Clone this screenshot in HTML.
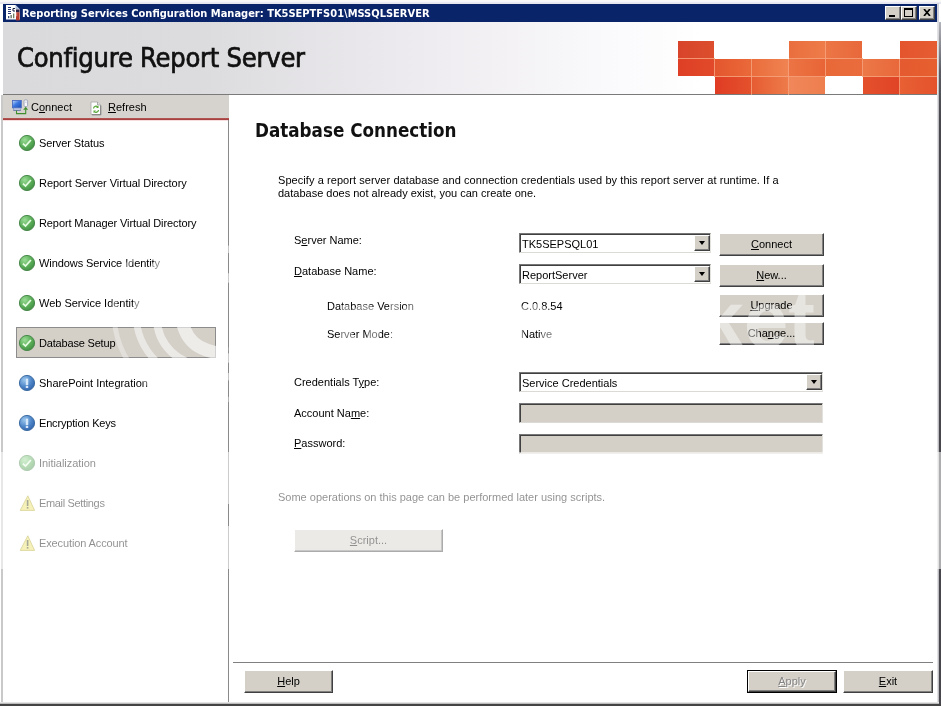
<!DOCTYPE html>
<html><head><meta charset="utf-8"><title>Reporting Services Configuration Manager</title>
<style>
html,body{margin:0;padding:0;}
body{width:941px;height:706px;overflow:hidden;background:#fff;position:relative;font-family:"Liberation Sans",sans-serif;font-size:11px;color:#000;}
.abs{position:absolute;}
.t{position:absolute;white-space:nowrap;line-height:13px;font-size:11px;will-change:transform;}
u{text-decoration:underline;text-underline-offset:1px;}
.btn{position:absolute;box-sizing:border-box;background:#d4d0c8;border:1px solid;border-color:#fff #404040 #404040 #fff;box-shadow:inset -1px -1px 0 #808080;text-align:center;font-size:11px;line-height:13px;}
.btn span{position:absolute;left:0;right:0;white-space:nowrap;will-change:transform;}
.sunk{position:absolute;box-sizing:border-box;border:1px solid;border-color:#777 #e4e2dc #dcdad4 #777;box-shadow:inset 1px 1px 0 #404040;}
.dd{position:absolute;box-sizing:border-box;width:16px;background:#d4d0c8;border:1px solid;border-color:#fff #404040 #404040 #fff;box-shadow:inset -1px -1px 0 #808080;}
.dd:after{content:"";position:absolute;left:3.5px;top:5px;border:3.5px solid transparent;border-top:4px solid #000;border-bottom:none;}
.nav{position:absolute;left:39px;white-space:nowrap;line-height:13px;font-size:11px;will-change:transform;}
.ic{position:absolute;left:18px;width:18px;height:18px;}
</style></head><body>

<!-- window frame -->
<div class="abs" style="left:0;top:0;width:941px;height:706px;background:#fff;"></div>
<div class="abs" style="left:0;top:0;width:941px;height:4px;background:linear-gradient(#f6f2ec 0,#fff 1px,#ecebf3 2px,#e4e4ee 4px);"></div>

<!-- title bar -->
<div class="abs" style="left:3px;top:4px;width:934px;height:18px;background:#0a246a;"></div>
<svg class="abs" style="left:5px;top:4px" width="17" height="18" viewBox="0 0 17 18">
  <path d="M1 1H10.500L15 5.500V15.500H1z" fill="#fff"/>
  <path d="M10.500 1L15 5.500H10.500z" fill="#aebbd6"/>
  <path d="M3 3.500h3M3 5.500h3M3 7.500h3M3 9.500h3" stroke="#2a3a78" stroke-width="1"/>
  <path d="M10 4.500H8V7h2" stroke="#10183c" stroke-width="1" fill="none"/>
  <rect x="3" y="12" width="1.300" height="2.200" fill="#3c4c74"/><rect x="5.500" y="11" width="1.300" height="3.200" fill="#5c6c58"/><rect x="8" y="9.500" width="1.300" height="4.700" fill="#6c7c5c"/>
  <rect x="11" y="5.500" width="3.600" height="3" fill="#2c2448"/>
  <rect x="11" y="8.300" width="3.600" height="8.100" fill="#b63c30"/>
  <rect x="11" y="8.300" width="1.200" height="4" fill="#d88078"/>
</svg>
<div class="t" id="title" style="left:21.5px;top:7px;color:#fff;font-weight:bold;font-family:'DejaVu Sans Condensed','Liberation Sans',sans-serif;">Reporting Services Configuration Manager: TK5SEPTFS01\MSSQLSERVER</div>

<div class="abs" style="left:937px;top:3px;width:2px;height:19px;background:#d2d2da;"></div>
<!-- caption buttons -->
<div class="btn" style="left:885px;top:6px;width:16px;height:14px;"><i class="abs" style="left:3px;top:8px;width:6px;height:2px;background:#000"></i></div>
<div class="btn" style="left:901px;top:6px;width:16px;height:14px;"><i class="abs" style="left:2px;top:1px;width:9px;height:9px;box-sizing:border-box;border:1px solid #000;border-top-width:2px"></i></div>
<div class="btn" style="left:919px;top:6px;width:16px;height:14px;">
 <svg class="abs" style="left:3px;top:2px" width="8" height="7" viewBox="0 0 8 7"><path d="M1 0L7 7M7 0L1 7" stroke="#000" stroke-width="1.700" fill="none"/></svg></div>

<!-- header band -->
<div class="abs" id="hdr" style="left:3px;top:22px;width:934px;height:72px;background:linear-gradient(90deg,#dad9dc 0,#dcdbde 200px,#eceaee 400px,#fbfafc 620px,#fff 700px);"></div>
<div class="abs" style="left:3px;top:94px;width:934px;height:1px;background:#7a7a7a;"></div>
<div class="t" id="hdrtxt" style="left:17.300px;top:42px;-webkit-text-stroke:.7px #111;font-size:27px;line-height:32px;color:#111;font-family:'DejaVu Sans Condensed','Liberation Sans',sans-serif;letter-spacing:-.23px;">Configure Report Server</div>

<!-- orange tiles -->
<svg class="abs" style="left:677px;top:40px" width="260" height="55" viewBox="677 40 260 55"><defs><linearGradient id="t00" x1="0" x2="1"><stop offset="0" stop-color="#d8442a"/><stop offset="1" stop-color="#dc4e2e"/></linearGradient><linearGradient id="t03" x1="0" x2="1"><stop offset="0" stop-color="#ea6e3e"/><stop offset="1" stop-color="#ee7c4a"/></linearGradient><linearGradient id="t04" x1="0" x2="1"><stop offset="0" stop-color="#ec7646"/><stop offset="1" stop-color="#e8683a"/></linearGradient><linearGradient id="t06" x1="0" x2="1"><stop offset="0" stop-color="#e4552e"/><stop offset="1" stop-color="#e65c32"/></linearGradient><linearGradient id="t10" x1="0" x2="1"><stop offset="0" stop-color="#de3f26"/><stop offset="1" stop-color="#e24a2a"/></linearGradient><linearGradient id="t11" x1="0" x2="1"><stop offset="0" stop-color="#e4562e"/><stop offset="1" stop-color="#ea6a3a"/></linearGradient><linearGradient id="t12" x1="0" x2="1"><stop offset="0" stop-color="#ea6c3c"/><stop offset="1" stop-color="#f08452"/></linearGradient><linearGradient id="t13" x1="0" x2="1"><stop offset="0" stop-color="#ec7444"/><stop offset="1" stop-color="#e86436"/></linearGradient><linearGradient id="t14" x1="0" x2="1"><stop offset="0" stop-color="#e86838"/><stop offset="1" stop-color="#ea6c3c"/></linearGradient><linearGradient id="t15" x1="0" x2="1"><stop offset="0" stop-color="#ec7848"/><stop offset="1" stop-color="#e8683a"/></linearGradient><linearGradient id="t16" x1="0" x2="1"><stop offset="0" stop-color="#e55a30"/><stop offset="1" stop-color="#e6602f"/></linearGradient><linearGradient id="t21" x1="0" x2="1"><stop offset="0" stop-color="#e03c24"/><stop offset="1" stop-color="#e4522c"/></linearGradient><linearGradient id="t22" x1="0" x2="1"><stop offset="0" stop-color="#e65c32"/><stop offset="1" stop-color="#ee7c4a"/></linearGradient><linearGradient id="t23" x1="0" x2="1"><stop offset="0" stop-color="#f0875a"/><stop offset="1" stop-color="#ee7e4e"/></linearGradient><linearGradient id="t25" x1="0" x2="1"><stop offset="0" stop-color="#e4502c"/><stop offset="1" stop-color="#e04426"/></linearGradient><linearGradient id="t26" x1="0" x2="1"><stop offset="0" stop-color="#e86034"/><stop offset="1" stop-color="#e4522c"/></linearGradient></defs><rect x="678" y="41" width="36" height="18" fill="url(#t00)"/><rect x="789" y="41" width="37" height="18" fill="url(#t03)"/><rect x="826" y="41" width="36" height="18" fill="url(#t04)"/><rect x="900" y="41" width="37" height="18" fill="url(#t06)"/><rect x="678" y="59" width="37" height="17" fill="url(#t10)"/><rect x="715" y="59" width="37" height="18" fill="url(#t11)"/><rect x="752" y="59" width="37" height="18" fill="url(#t12)"/><rect x="789" y="59" width="37" height="18" fill="url(#t13)"/><rect x="826" y="59" width="37" height="17" fill="url(#t14)"/><rect x="863" y="59" width="37" height="18" fill="url(#t15)"/><rect x="900" y="59" width="37" height="18" fill="url(#t16)"/><rect x="715" y="77" width="37" height="17" fill="url(#t21)"/><rect x="752" y="77" width="37" height="17" fill="url(#t22)"/><rect x="789" y="77" width="36" height="17" fill="url(#t23)"/><rect x="863" y="77" width="37" height="17" fill="url(#t25)"/><rect x="900" y="77" width="37" height="17" fill="url(#t26)"/><rect x="678" y="58" width="37" height="1" fill="#f6a27c" fill-opacity=".85"/><rect x="825" y="41" width="1" height="18" fill="#f6a27c" fill-opacity=".85"/><rect x="789" y="58" width="37" height="1" fill="#f6a27c" fill-opacity=".85"/><rect x="826" y="58" width="37" height="1" fill="#f6a27c" fill-opacity=".85"/><rect x="900" y="58" width="37" height="1" fill="#f6a27c" fill-opacity=".85"/><rect x="714" y="59" width="1" height="18" fill="#f6a27c" fill-opacity=".85"/><rect x="751" y="59" width="1" height="18" fill="#f6a27c" fill-opacity=".85"/><rect x="715" y="76" width="37" height="1" fill="#f6a27c" fill-opacity=".85"/><rect x="788" y="59" width="1" height="18" fill="#f6a27c" fill-opacity=".85"/><rect x="752" y="76" width="37" height="1" fill="#f6a27c" fill-opacity=".85"/><rect x="825" y="59" width="1" height="18" fill="#f6a27c" fill-opacity=".85"/><rect x="789" y="76" width="37" height="1" fill="#f6a27c" fill-opacity=".85"/><rect x="862" y="59" width="1" height="18" fill="#f6a27c" fill-opacity=".85"/><rect x="899" y="59" width="1" height="18" fill="#f6a27c" fill-opacity=".85"/><rect x="863" y="76" width="37" height="1" fill="#f6a27c" fill-opacity=".85"/><rect x="900" y="76" width="37" height="1" fill="#f6a27c" fill-opacity=".85"/><rect x="751" y="77" width="1" height="18" fill="#f6a27c" fill-opacity=".85"/><rect x="788" y="77" width="1" height="18" fill="#f6a27c" fill-opacity=".85"/><rect x="899" y="77" width="1" height="18" fill="#f6a27c" fill-opacity=".85"/></svg>

<!-- toolbar -->
<div class="abs" style="left:3px;top:95px;width:226px;height:23px;background:#d6d3ce;"></div>
<div class="abs" style="left:3px;top:118px;width:226px;height:2px;background:linear-gradient(#b85a58,#a03a3a);"></div>
<div class="abs" style="left:3px;top:120px;width:226px;height:1px;background:#f6dede;"></div>

<!-- left panel borders -->
<div class="abs" style="left:1px;top:95px;width:2px;height:608px;background:#c9c9c9;"></div>
<div class="abs" style="left:228px;top:120px;width:1px;height:582px;background:#8a8a8a;"></div>

<!-- toolbar items -->
<svg class="abs" style="left:11px;top:98px" width="19" height="18" viewBox="0 0 19 18">
  <defs><linearGradient id="mon" x1="0" y1="0" x2="1" y2="1"><stop offset="0" stop-color="#c4dcff"/><stop offset=".45" stop-color="#3c78e0"/><stop offset="1" stop-color="#1c4cb4"/></linearGradient></defs>
  <rect x="1.500" y="2.500" width="8.800" height="7.300" fill="url(#mon)" stroke="#4a6cc0" stroke-width=".9"/>
  <rect x="2.600" y="10.300" width="6.800" height="1.700" fill="#eef2fa" stroke="#7088c4" stroke-width=".5"/>
  <path d="M2.400 12.300h7.400" stroke="#3a4e94" stroke-width=".7"/>
  <rect x="13" y="1.900" width="3.600" height="6.600" rx="1.200" fill="#f6f7fb" stroke="#9098b4" stroke-width=".8"/>
  <path d="M14 4.200h1.600" stroke="#b0b6cc" stroke-width=".7"/>
  <path d="M5.500 12.600v3h9.200v-4.200" stroke="#3e8e2e" stroke-width="1.100" fill="none"/>
  <path d="M12.200 11.700l2.500-2.900 2.400 2.900z" fill="#3e8e2e"/>
</svg>
<div class="t" style="left:31px;top:101px;">C<u>o</u>nnect</div>
<svg class="abs" style="left:89px;top:100px" width="14" height="16" viewBox="0 0 14 16">
  <path d="M2 2h6.500l3 3v9.500H2z" fill="#fdfdfd" stroke="#a8a8a8" stroke-width=".8"/>
  <path d="M11.800 5.500v9.300H3" stroke="#787878" stroke-width="1" fill="none"/>
  <path d="M8.500 2v3h3" fill="#e0e0e0" stroke="#909090" stroke-width=".7"/>
  <path d="M4.500 8.500a2.500 2.500 0 0 1 4.300-1.500" stroke="#5aa83a" stroke-width="1.200" fill="none"/>
  <path d="M9.500 5.500v2.500h-2.500z" fill="#5aa83a"/>
  <path d="M9.500 10a2.500 2.500 0 0 1-4.300 1.500" stroke="#5aa83a" stroke-width="1.200" fill="none"/>
  <path d="M4.500 13v-2.500h2.500z" fill="#5aa83a"/>
</svg>
<div class="t" style="left:107.500px;top:101px;"><u>R</u>efresh</div>

<!-- icon defs -->
<svg width="0" height="0" style="position:absolute">
 <defs>
  <radialGradient id="gg" cx=".35" cy=".3" r=".8"><stop offset="0" stop-color="#9adc96"/><stop offset=".55" stop-color="#5aae58"/><stop offset="1" stop-color="#3e8a40"/></radialGradient>
  <radialGradient id="bg" cx=".35" cy=".3" r=".8"><stop offset="0" stop-color="#9cc8ee"/><stop offset=".55" stop-color="#4e86c8"/><stop offset="1" stop-color="#2e5ea8"/></radialGradient>
 </defs>
</svg>

<!-- nav -->
<div class="abs" style="left:16px;top:327px;width:200px;height:31px;box-sizing:border-box;background:#d4d0c8;border:1px solid #8c8c8c;"></div>
<svg class="ic" style="top:134px" viewBox="0 0 18 18"><circle cx="9" cy="9" r="7.600" fill="url(#gg)" stroke="#4a8a4c" stroke-width="1"/><path d="M4.900 9.600l2.600 2.400 5.400-6" stroke="#e4fbe0" stroke-width="1.800" fill="none"/></svg><div class="nav" style="top:137px;letter-spacing:-0.09px">Server Status</div>
<svg class="ic" style="top:174px" viewBox="0 0 18 18"><circle cx="9" cy="9" r="7.600" fill="url(#gg)" stroke="#4a8a4c" stroke-width="1"/><path d="M4.900 9.600l2.600 2.400 5.400-6" stroke="#e4fbe0" stroke-width="1.800" fill="none"/></svg><div class="nav" style="top:177px;letter-spacing:-0.06px">Report Server Virtual Directory</div>
<svg class="ic" style="top:214px" viewBox="0 0 18 18"><circle cx="9" cy="9" r="7.600" fill="url(#gg)" stroke="#4a8a4c" stroke-width="1"/><path d="M4.900 9.600l2.600 2.400 5.400-6" stroke="#e4fbe0" stroke-width="1.800" fill="none"/></svg><div class="nav" style="top:217px;letter-spacing:-0.10px">Report Manager Virtual Directory</div>
<svg class="ic" style="top:254px" viewBox="0 0 18 18"><circle cx="9" cy="9" r="7.600" fill="url(#gg)" stroke="#4a8a4c" stroke-width="1"/><path d="M4.900 9.600l2.600 2.400 5.400-6" stroke="#e4fbe0" stroke-width="1.800" fill="none"/></svg><div class="nav" style="top:257px;letter-spacing:-0.08px">Windows Service Identity</div>
<svg class="ic" style="top:294px" viewBox="0 0 18 18"><circle cx="9" cy="9" r="7.600" fill="url(#gg)" stroke="#4a8a4c" stroke-width="1"/><path d="M4.900 9.600l2.600 2.400 5.400-6" stroke="#e4fbe0" stroke-width="1.800" fill="none"/></svg><div class="nav" style="top:297px;letter-spacing:-0.01px">Web Service Identity</div>
<svg class="ic" style="top:334px" viewBox="0 0 18 18"><circle cx="9" cy="9" r="7.600" fill="url(#gg)" stroke="#4a8a4c" stroke-width="1"/><path d="M4.900 9.600l2.600 2.400 5.400-6" stroke="#e4fbe0" stroke-width="1.800" fill="none"/></svg><div class="nav" style="top:337px;letter-spacing:-0.18px">Database Setup</div>
<svg class="ic" style="top:374px" viewBox="0 0 18 18"><circle cx="9" cy="9" r="7.600" fill="url(#bg)" stroke="#3e6ea4" stroke-width="1"/><path d="M9 4.600v6.600" stroke="#d6e8fa" stroke-width="2.400"/><rect x="7.800" y="12" width="2.400" height="2" fill="#d6e8fa"/></svg><div class="nav" style="top:377px;letter-spacing:-0.03px">SharePoint Integration</div>
<svg class="ic" style="top:414px" viewBox="0 0 18 18"><circle cx="9" cy="9" r="7.600" fill="url(#bg)" stroke="#3e6ea4" stroke-width="1"/><path d="M9 4.600v6.600" stroke="#d6e8fa" stroke-width="2.400"/><rect x="7.800" y="12" width="2.400" height="2" fill="#d6e8fa"/></svg><div class="nav" style="top:417px;letter-spacing:-0.17px">Encryption Keys</div>
<svg class="ic" style="top:454px" viewBox="0 0 18 18"><circle cx="9" cy="9" r="7.600" fill="url(#gg)" stroke="#4a8a4c" stroke-width="1"/><path d="M4.900 9.600l2.600 2.400 5.400-6" stroke="#e4fbe0" stroke-width="1.800" fill="none"/></svg><div class="nav" style="top:457px;letter-spacing:-0.05px">Initialization</div>
<svg class="ic" style="top:494px" viewBox="0 0 18 18"><path d="M9.800 1.800L16.600 16.400H2.200z" fill="#e8e060" stroke="#b0a020" stroke-width=".9" stroke-linejoin="round"/><path d="M9.600 6v6" stroke="#3a3a10" stroke-width="1.600"/><rect x="8.800" y="13" width="1.600" height="1.600" fill="#3a3a10"/></svg><div class="nav" style="top:497px;letter-spacing:-0.34px">Email Settings</div>
<svg class="ic" style="top:534px" viewBox="0 0 18 18"><path d="M9.800 1.800L16.600 16.400H2.200z" fill="#e8e060" stroke="#b0a020" stroke-width=".9" stroke-linejoin="round"/><path d="M9.600 6v6" stroke="#3a3a10" stroke-width="1.600"/><rect x="8.800" y="13" width="1.600" height="1.600" fill="#3a3a10"/></svg><div class="nav" style="top:537px;letter-spacing:-0.12px">Execution Account</div>

<!-- right panel -->
<div class="t" id="h1" style="left:254.500px;top:119px;font-size:18.670px;line-height:24px;font-weight:bold;font-family:'DejaVu Sans Condensed','Liberation Sans',sans-serif;color:#111;">Database Connection</div>
<div class="t" id="d1" style="left:278px;top:174px;letter-spacing:.07px">Specify a report server database and connection credentials used by this report server at runtime. If a</div>
<div class="t" id="d2" style="left:278px;top:187px;">database does not already exist, you can create one.</div>

<div class="t" style="left:294px;top:234px;">S<u>e</u>rver Name:</div>
<div class="t" style="left:294px;top:265px;"><u>D</u>atabase Name:</div>
<div class="t" style="left:327px;top:300px;">Database Version</div>
<div class="t" style="left:327px;top:328px;">Server Mode:</div>
<div class="t" style="left:294px;top:376px;">Credentials T<u>y</u>pe:</div>
<div class="t" style="left:294px;top:407px;">Account Na<u>m</u>e:</div>
<div class="t" style="left:294px;top:437px;"><u>P</u>assword:</div>

<div class="sunk" style="left:519px;top:233px;width:192px;height:20px;background:#fff;"></div>
<div class="dd" style="left:694px;top:235px;height:16px;"></div>
<div class="t" style="left:521.5px;top:237.500px;">TK5SEPSQL01</div>
<div class="sunk" style="left:519px;top:264px;width:192px;height:20px;background:#fff;"></div>
<div class="dd" style="left:694px;top:266px;height:16px;"></div>
<div class="t" style="left:521.5px;top:268.500px;">ReportServer</div>
<div class="t" style="left:521px;top:300px;">C.0.8.54</div>
<div class="t" style="left:521px;top:328px;">Native</div>

<div class="btn" style="left:719px;top:233px;width:105px;height:23px;"><span style="top:4px"><u>C</u>onnect</span></div>
<div class="btn" style="left:719px;top:264px;width:105px;height:23px;"><span style="top:4px"><u>N</u>ew...</span></div>
<div class="btn" style="left:719px;top:294px;width:105px;height:23px;"><span style="top:4px"><u>U</u>pgrade</span></div>
<div class="btn" style="left:719px;top:322px;width:105px;height:23px;"><span style="top:4px">Cha<u>n</u>ge...</span></div>

<div class="sunk" style="left:519px;top:372px;width:304px;height:20px;background:#fff;"></div>
<div class="dd" style="left:806px;top:374px;height:16px;"></div>
<div class="t" style="left:521.5px;top:376.500px;">Service Credentials</div>
<div class="sunk" style="left:519px;top:403px;width:304px;height:20px;background:#d4d0c8;"></div>
<div class="sunk" style="left:519px;top:434px;width:304px;height:20px;background:#d4d0c8;"></div>

<div class="t" style="left:278px;top:491px;">Some operations on this page can be performed later using scripts.</div>
<div class="btn" style="left:294px;top:529px;width:149px;height:23px;"><span style="top:4px"><u>S</u>cript...</span></div>

<!-- bottom -->
<div class="abs" style="left:233px;top:662px;width:700px;height:1px;background:#808080;"></div>
<div class="btn" style="left:244px;top:670px;width:89px;height:23px;"><span style="top:4px"><u>H</u>elp</span></div>
<div class="abs" style="left:747px;top:670px;width:90px;height:23px;background:#000;"></div>
<div class="btn" style="left:748px;top:671px;width:88px;height:21px;color:#848484;text-shadow:1px 1px 0 #fff;"><span style="top:3px"><u>A</u>pply</span></div>
<div class="btn" style="left:843px;top:670px;width:90px;height:23px;"><span style="top:4px"><u>E</u>xit</span></div>

<!-- right & bottom frame edges -->
<div class="abs" style="left:937px;top:22px;width:1px;height:682px;background:#e2e2e4;"></div>
<div class="abs" style="left:938px;top:22px;width:1px;height:682px;background:linear-gradient(#dcdce0 0,#bdbdc0 70px);"></div>
<div class="abs" style="left:939px;top:22px;width:2px;height:684px;background:linear-gradient(#b4b4bc 0,#5a5a62 50px,#46464c 100px);"></div>
<div class="abs" style="left:0;top:702px;width:939px;height:1px;background:#e4e4e4;"></div>
<div class="abs" style="left:0;top:703px;width:939px;height:1px;background:#bcbcbc;"></div>
<div class="abs" style="left:0;top:704px;width:941px;height:2px;background:#444;"></div>

<!-- image-host watermark overlays (translucent white) -->
<svg class="abs" style="left:3px;top:240px" width="226" height="170" viewBox="3 240 226 170">
 <g fill="none" stroke="#fff">
  <circle cx="204" cy="313" r="90" stroke-width="5" stroke-opacity=".35"/>
  <circle cx="204" cy="313" r="68" stroke-width="7" stroke-opacity=".5"/>
  <circle cx="204" cy="318" r="47" stroke-width="8" stroke-opacity=".55"/>
  <path d="M181 312C183 338 195 352 228 354" stroke-width="13" stroke-opacity=".6"/>
 </g>
</svg>
<div class="abs" id="wmtxt" style="left:335px;top:270px;font-size:80px;line-height:100px;font-weight:bold;color:rgba(255,255,255,.44);white-space:nowrap;will-change:transform;">photobucket</div>
<div class="abs" style="left:0;top:452px;width:941px;height:117px;background:rgba(255,255,255,.56);"></div>
<div class="abs" style="left:228px;top:504px;width:1px;height:22px;background:#8a8a8a;"></div>

</body></html>
